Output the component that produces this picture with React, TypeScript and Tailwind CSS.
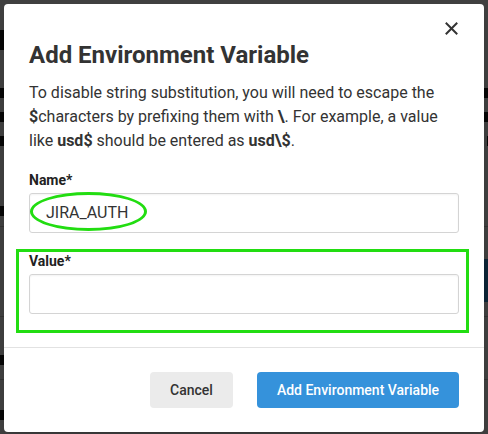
import React from 'react';

// faint shapes of the page behind the overlay
const Line = ({ w }: { w: string }) => <div className={`h-[10px] ${w} bg-[#1c1c1c]`} />;

const App: React.FC = () => {
  return (
    <div className="relative w-[488px] h-[434px] overflow-hidden bg-white font-['Roboto',sans-serif]">
      {/* Page behind the dialog */}
      <div className="flex flex-col pt-[30px]">
        <div className="h-[20px] w-[8px] bg-[#1c1c1c]" />
        <div className="mt-[38px] flex flex-col gap-[14px]">
          <div className="flex justify-between"><Line w="w-[6px]" /><Line w="w-[6px]" /></div>
          <div className="flex justify-between"><Line w="w-[8px]" /><Line w="w-[8px]" /></div>
          <div className="flex justify-between"><Line w="w-[8px]" /><Line w="w-[1px]" /></div>
        </div>
        <div className="mt-[60px]"><Line w="w-[5px]" /></div>
        <div className="mt-[10px] border-t border-[#ccc]" />
        <div className="mt-[32px] flex justify-end">
          <div className="h-[43px] w-[120px] bg-[#3592db]" />
        </div>
        <div className="mt-[14px] border-t border-[#ccc]" />
        <div className="mt-[38px]"><Line w="w-[6px]" /></div>
        <div className="mt-[14px] border-t border-[#ccc]" />
        <div className="mt-[30px]"><Line w="w-[6px]" /></div>
      </div>
      <div className="absolute inset-0 bg-black/75" />

      {/* Dialog */}
      <div className="absolute left-[4px] top-[4px] w-[480px] h-[428px] rounded-[4px] bg-white shadow-lg flex flex-col">
        <div className="relative px-[25px] pt-[35px]">
          <button className="absolute right-[26px] top-[17px] w-[14px] h-[14px] flex items-center justify-center text-[#333]">
            <svg width="13" height="13" viewBox="0 0 13 13" fill="none" stroke="currentColor" strokeWidth="2" strokeLinecap="square">
              <path d="M1.5 1.5l10 10M11.5 1.5l-10 10" />
            </svg>
          </button>
          <h1 className="text-[24px] font-bold leading-[32px] text-[#333]">Add Environment Variable</h1>
          <p className="mt-[10px] text-[16px] leading-[24px] text-[#333]">
            To disable string substitution, you will need to escape the <b>$</b>characters by prefixing them with <b>\</b>. For example, a value like <b>usd$</b> should be entered as <b>usd\$</b>.
          </p>

          <div className="relative mt-[18px]">
            <label className="block text-[14px] font-bold leading-[18px] text-[#222]">Name*</label>
            <div className="mt-[4px] h-[40px] rounded-[3px] border border-[#d4d4d4] shadow-[inset_0_1px_2px_rgba(0,0,0,0.05)] flex items-center px-[16px] text-[16px] text-[#333]">
              JIRA_AUTH
            </div>
            <div className="absolute left-[1px] top-[21px] w-[117px] h-[39px] rounded-[50%] border-[3px] border-[#22dd11]" />
          </div>

          <div className="relative mt-[19px]">
            <label className="block text-[14px] font-bold leading-[18px] text-[#222]">Value*</label>
            <div className="mt-[4px] h-[40px] rounded-[3px] border border-[#d4d4d4] shadow-[inset_0_1px_2px_rgba(0,0,0,0.05)]" />
            <div className="absolute -left-[13px] -top-[3px] w-[453px] h-[84px] border-[3px] border-[#22dd11]" />
          </div>
        </div>

        <div className="mt-[33px] border-t border-[#e2e2e2]" />

        <div className="flex justify-end gap-[24px] px-[25px] pt-[24px]">
          <button className="h-[36px] w-[83px] rounded-[4px] bg-[#ebebeb] text-[14px] font-medium text-[#333]">Cancel</button>
          <button className="h-[36px] w-[202px] rounded-[4px] bg-[#3592db] text-[14px] font-medium text-white">Add Environment Variable</button>
        </div>
      </div>
    </div>
  );
};

export default App;
